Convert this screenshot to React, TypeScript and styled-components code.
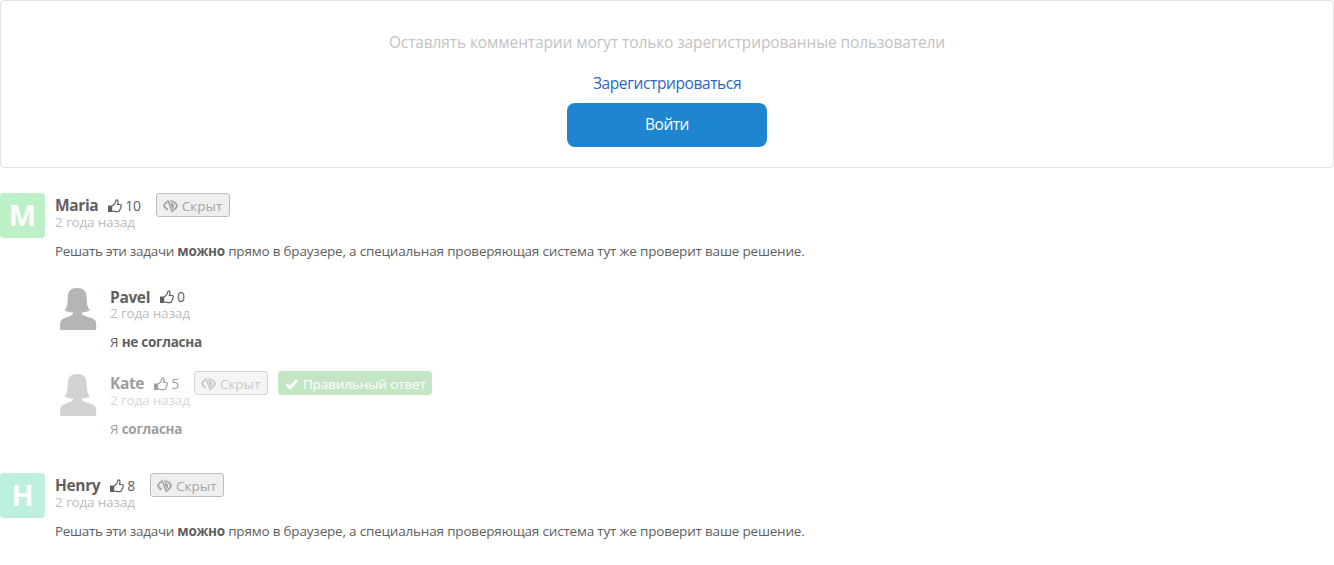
import React from 'react';
import styled, { createGlobalStyle } from 'styled-components';

const Global = createGlobalStyle`
  body { margin: 0; background: #fff; color: #5f5f5f; font: 13.5px/20px "Open Sans", "Noto Sans", sans-serif; }
  * { box-sizing: border-box; }
`;

const Notice = styled.section`
  height: 168px;
  border: 1px solid #e2e2e2;
  border-radius: 4px;
  display: flex;
  flex-direction: column;
  align-items: center;
  padding-top: 28px;
`;
const Message = styled.p`
  margin: 0;
  font-size: 15.5px;
  line-height: 26px;
  letter-spacing: -0.115px;
  color: #c3c3c3;
`;
const Register = styled.a`
  margin-top: 15px;
  font-size: 15.5px;
  line-height: 26px;
  letter-spacing: -0.39px;
  color: #2a68c0;
`;
const Login = styled.button`
  margin-top: 7px;
  width: 200px;
  height: 44px;
  padding: 0 0 2px;
  border: 0;
  border-radius: 8px;
  background: #1e85d0;
  color: #fff;
  font: 15.5px/26px "Open Sans", "Noto Sans", sans-serif;
  letter-spacing: -0.5px;
`;

const Row = styled.article<{ $top: number; $reply?: boolean; $faded?: boolean }>`
  display: flex;
  margin-top: ${p => p.$top}px;
  margin-left: ${p => (p.$reply ? 55 : 0)}px;
  opacity: ${p => (p.$faded ? 0.6 : 1)};
`;
const Letter = styled.div<{ $bg: string }>`
  width: 45px;
  height: 45px;
  border-radius: 4px;
  background: ${p => p.$bg};
  color: #fff;
  font-size: 29px;
  font-weight: 700;
  line-height: 43px;
  text-align: center;
`;
const PortraitSvg = styled.svg`
  width: 45px;
  height: 45px;
  display: block;
  fill: #b5b5b5;
`;
const Body = styled.div`
  margin-left: 10px;
`;
const Head = styled.header<{ $height: number }>`
  display: flex;
  height: ${p => p.$height}px;
  align-items: center;
`;
const Name = styled.b`
  font-size: 15.5px;
  font-weight: 700;
  letter-spacing: -0.35px;
`;
const Likes = styled.span`
  margin-left: 10px;
  padding-top: 1px;
  display: flex;
  align-items: center;
  gap: 3px;
  font-size: 14px;
  letter-spacing: -0.3px;
`;
const Badge = styled.span<{ $ok?: boolean }>`
  display: flex;
  align-items: center;
  gap: 4px;
  width: ${p => (p.$ok ? 154 : 74)}px;
  height: 24px;
  margin-left: ${p => (p.$ok ? 10 : 15)}px;
  padding: 1px 0 0 6px;
  border: 1px solid ${p => (p.$ok ? '#9fd69f' : '#bdbdbd')};
  border-radius: 3px;
  background: ${p => (p.$ok ? '#9fd69f' : '#efefef')};
  color: ${p => (p.$ok ? '#fff' : '#a6a6a6')};
  letter-spacing: ${p => (p.$ok ? -0.12 : 0)}px;
  white-space: nowrap;
`;
const Icon = styled.svg`
  display: block;
  flex: none;
`;
const When = styled.div`
  margin-top: -5px;
  line-height: 20px;
  letter-spacing: -0.17px;
  color: #bdbdbd;
`;
const Text = styled.p`
  margin: 9px 0 1px;
  letter-spacing: -0.19px;
  b { letter-spacing: -0.27px; }
`;
const Lead = styled.span`
  letter-spacing: -0.3px;
`;

const Thumb = () => (
  <Icon width="14" height="14" viewBox="0 0 14 14">
    <path d="M0 6.500h4.200V13H0z" fill="currentColor" />
    <path
      d="M4 7c1.600-.6 2.200-2 3-2.900C7.700 3.200 7.500.8 8.700.8c1.500 0 1.700 2.200.6 4.700h2.800c1.400 0 1.500 1.600.7 2.200.3.8 0 1.500-.5 1.800.1.8-.2 1.300-.7 1.600C11.500 12.500 10.700 12.700 9.500 12.700 7.200 12.700 6 12 4 12"
      fill="none"
      stroke="currentColor"
      strokeWidth="1.2"
      strokeLinejoin="round"
    />
  </Icon>
);
const Hidden = () => (
  <Icon width="15" height="14" viewBox="0 0 15 14" fill="none" stroke="currentColor">
    <path d="M4.300 2.800C2.600 3.800 1.400 5.200 1 6.600c.6 1.800 1.800 3.200 3.800 4" strokeWidth="1.900" />
    <path d="M4.600.7l5 12.500" strokeWidth="1.600" />
    <path d="M7.300 2.100c3.400.1 5.900 2 6.800 4.700-.8 2.300-2.100 3.600-4.100 4.500" strokeWidth="1.900" />
    <path d="M7 3.400c2.400 0 4.300 1.400 4.200 3.400-.1 1.500-.8 2.500-1.800 3.200z" fill="currentColor" stroke="none" />
  </Icon>
);
const Check = () => (
  <Icon width="14" height="12" viewBox="0 0 14 12">
    <path d="M1.500 6.300l3.400 3.400 7-7.500" fill="none" stroke="currentColor" strokeWidth="2.800" />
  </Icon>
);
const Portrait = () => (
  <PortraitSvg viewBox="0 0 45 45">
    <path d="M22 3C28.500 3 31.200 6 31.500 11L31.900 17C32.200 21 33.200 23.400 35 25 33 26.900 29.500 27.200 26.800 27.400V28.800C28.500 31 33 31.800 37 33.200 40 34.300 41.200 36 41.200 39V45H5.200V39C5.200 36 6.300 34.300 9 33.200 13 31.800 16.500 31 18 28.800V27.400C15 27.200 11.500 26.900 9.500 25 11.500 23.400 12.200 21 12.500 17L12.900 11C13.300 6 15.800 3 22 3Z" />
  </PortraitSvg>
);

interface CommentProps {
  name: string;
  likes: number;
  top: number;
  color?: string;
  hidden?: boolean;
  correct?: boolean;
  children: React.ReactNode;
}

const Comment = ({ name, likes, top, color, hidden, correct, children }: CommentProps) => (
  <Row $top={top} $reply={!color} $faded={correct}>
    {color ? <Letter $bg={color}>{name[0]}</Letter> : <Portrait />}
    <Body>
      <Head $height={hidden ? 24 : 23}>
        <Name>{name}</Name>
        <Likes><Thumb />{likes}</Likes>
        {hidden && <Badge><Hidden />Скрыт</Badge>}
        {correct && <Badge $ok><Check />Правильный ответ</Badge>}
      </Head>
      <When>2 года назад</When>
      <Text>{children}</Text>
    </Body>
  </Row>
);

const Solution = () => (
  <>
    <Lead>Решать эти задачи </Lead><b>можно</b> прямо в браузере, а специальная проверяющая система тут же проверит ваше решение.
  </>
);

export default function App() {
  return (
    <>
      <Global />
      <Notice>
        <Message>Оставлять комментарии могут только зарегистрированные пользователи</Message>
        <Register>Зарегистрироваться</Register>
        <Login>Войти</Login>
      </Notice>
      <Comment name="Maria" likes={10} top={25} color="#bdf0c6" hidden><Solution /></Comment>
      <Comment name="Pavel" likes={0} top={23}>Я <b>не согласна</b></Comment>
      <Comment name="Kate" likes={5} top={18} hidden correct>Я <b>согласна</b></Comment>
      <Comment name="Henry" likes={8} top={33} color="#bdf0dc" hidden><Solution /></Comment>
    </>
  );
}
